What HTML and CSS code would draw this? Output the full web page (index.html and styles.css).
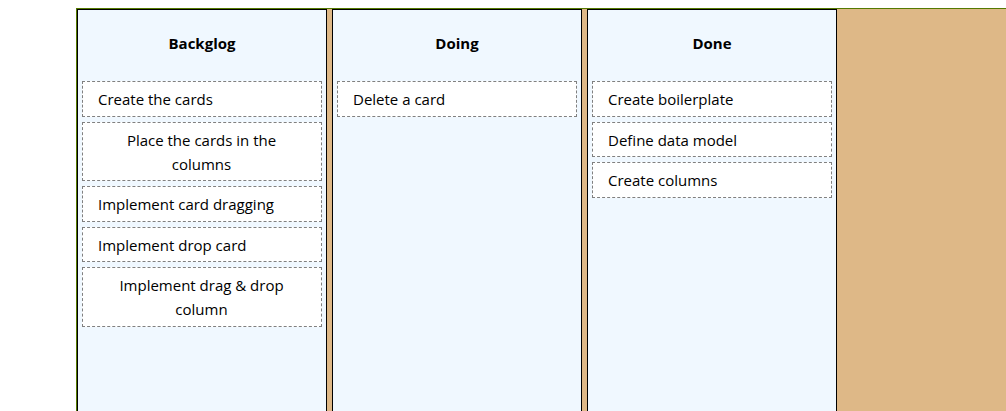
FILE: index.html
```html
<!DOCTYPE html>
<html lang="en">
<head>
<meta charset="utf-8">
<title>Kanban</title>
<link rel="stylesheet" href="styles.css">
</head>
<body>
<div class="board">
  <section class="column">
    <h3 class="column-title">Backglog</h3>
    <div class="card"><span>Create the cards</span></div>
    <div class="card"><span>Place the cards in the columns</span></div>
    <div class="card"><span>Implement card dragging</span></div>
    <div class="card"><span>Implement drop card</span></div>
    <div class="card"><span>Implement drag &amp; drop column</span></div>
  </section>
  <section class="column">
    <h3 class="column-title">Doing</h3>
    <div class="card"><span>Delete a card</span></div>
  </section>
  <section class="column">
    <h3 class="column-title">Done</h3>
    <div class="card"><span>Create boilerplate</span></div>
    <div class="card"><span>Define data model</span></div>
    <div class="card"><span>Create columns</span></div>
  </section>
</div>
</body>
</html>
```

FILE: styles.css
```css
html, body {
  overflow: hidden;
}
body {
  margin: 8px 0 0;
  background: #ffffff;
  font-family: "Open Sans", "Noto Sans", sans-serif;
  font-size: 15px;
  color: #000;
}
.board {
  display: flex;
  align-items: stretch;
  margin: 0 -1px 0 76px;
  height: 100vh;
  background: #deb887;
  border: 1px solid #557a00;
}
.column {
  width: 248px;
  flex: none;
  margin-right: 5px;
  background: #f0f8ff;
  border: 1px solid #000;
}
.column-title {
  margin: 0;
  padding: 21px 0 21px;
  font-size: 15px;
  line-height: 24px;
  font-weight: bold;
  text-align: center;
}
.card {
  display: flex;
  margin: 5px 4px;
  padding: 5px 16px 4.5px 15px;
  background: #fff;
  border: 1px dashed #808080;
  line-height: 24px;
  text-align: center;
}
```
